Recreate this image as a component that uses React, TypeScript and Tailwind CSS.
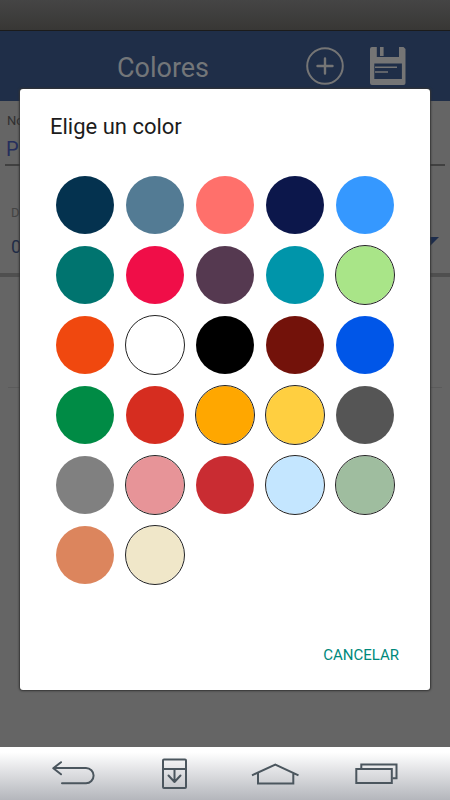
import React, { useState } from 'react';
import clsx from 'clsx';

type Swatch = { name: string; fill: string; outlined?: boolean };

const SWATCHES: Swatch[] = [
  { name: 'Azul petróleo', fill: 'bg-[#04324f]' },
  { name: 'Azul acero', fill: 'bg-[#537b94]' },
  { name: 'Coral', fill: 'bg-[#ff706b]' },
  { name: 'Azul noche', fill: 'bg-[#0c174b]' },
  { name: 'Celeste', fill: 'bg-[#3598ff]' },
  { name: 'Verde azulado', fill: 'bg-[#00746f]' },
  { name: 'Carmesí', fill: 'bg-[#f00e48]' },
  { name: 'Ciruela', fill: 'bg-[#553950]' },
  { name: 'Turquesa', fill: 'bg-[#0095aa]' },
  { name: 'Verde claro', fill: 'bg-[#a9e588]', outlined: true },
  { name: 'Naranja rojizo', fill: 'bg-[#f0480f]' },
  { name: 'Blanco', fill: 'bg-white', outlined: true },
  { name: 'Negro', fill: 'bg-black' },
  { name: 'Granate', fill: 'bg-[#73120a]' },
  { name: 'Azul', fill: 'bg-[#0056e8]' },
  { name: 'Verde', fill: 'bg-[#008b45]' },
  { name: 'Rojo', fill: 'bg-[#d62d20]' },
  { name: 'Naranja', fill: 'bg-[#ffa700]', outlined: true },
  { name: 'Amarillo', fill: 'bg-[#ffcf40]', outlined: true },
  { name: 'Gris oscuro', fill: 'bg-[#555555]' },
  { name: 'Gris', fill: 'bg-[#808080]' },
  { name: 'Rosa', fill: 'bg-[#e79498]', outlined: true },
  { name: 'Rojo cereza', fill: 'bg-[#c92c32]' },
  { name: 'Azul claro', fill: 'bg-[#c4e6ff]', outlined: true },
  { name: 'Verde salvia', fill: 'bg-[#9fbd9f]', outlined: true },
  { name: 'Terracota', fill: 'bg-[#dc855d]' },
  { name: 'Crema', fill: 'bg-[#f0e7c9]', outlined: true },
];

const AddIcon = () => (
  <svg width="38" height="38" viewBox="0 0 38 38" fill="none" stroke="currentColor" strokeWidth="2" strokeLinecap="round">
    <circle cx="19" cy="19" r="17.8" />
    <path d="M19 11.5v15M11.5 19h15" strokeWidth="2.4" />
  </svg>
);

const SaveIcon = () => (
  <svg width="36" height="38" viewBox="0 0 36 38" fill="currentColor">
    <path
      fillRule="evenodd"
      d="M2 0h4.8v10H29V0h4.5L35.500 2v34a2 2 0 0 1-2 2H2a2 2 0 0 1-2-2V2a2 2 0 0 1 2-2ZM4.300 16.500v15.500h27.600V16.500Z"
    />
    <path d="M10 0h3.600v9H10zM5 19.500h22v1.600H5zM5 24.200h13v1.600H5z" />
  </svg>
);

const BackIcon = () => (
  <svg width="44" height="26" viewBox="0 0 44 26" fill="none" stroke="currentColor" strokeWidth="2" strokeLinecap="round" strokeLinejoin="round">
    <path d="M9 1.200 1.300 7.300l7.700 6M1.800 7H34a7.600 7.600 0 0 1 0 15.200H10" />
  </svg>
);

const DownloadIcon = () => (
  <svg width="26" height="32" viewBox="0 0 26 32" fill="none" stroke="currentColor" strokeWidth="2" strokeLinecap="round" strokeLinejoin="round">
    <rect x="1" y="1.500" width="23" height="28.500" rx="1" />
    <path d="M1 11h23M12.500 11.500V24M6.500 17.500l6 6.500 6-6.500" />
  </svg>
);

const HomeIcon = () => (
  <svg width="48" height="24" viewBox="0 0 48 24" fill="none" stroke="currentColor" strokeWidth="2">
    <path d="M1 13.300 24.300 2.500l23.200 10.800M7 10.500v11h35.300v-11" />
  </svg>
);

const RecentIcon = () => (
  <svg width="44" height="24" viewBox="0 0 44 24" fill="none" stroke="currentColor" strokeWidth="2">
    <rect x="2.300" y="7" width="35.500" height="14" />
    <path d="M7.300 6.500v-4h35.200v13.800H38.500" />
  </svg>
);

const NavButton: React.FC<{ label: string; children: React.ReactNode }> = ({ label, children }) => (
  <button type="button" aria-label={label} className="flex flex-1 items-center justify-center">
    {children}
  </button>
);

const ColorForm = () => (
  <form className="flex-1 bg-[#656565]">
    <div className="px-[5px] pt-3">
      <label htmlFor="name" className="block px-0.5 text-[13px] leading-4 text-[#303030]">
        Nombre
      </label>
      <input
        id="name"
        defaultValue="P"
        className="block h-[37px] w-full border-b-2 border-[#404040] bg-transparent px-px pt-1 text-xl text-[#262e5c] outline-none"
      />
    </div>

    <div className="border-b-4 border-[#4f4f4f] px-[11px] pb-3 pt-[39px]">
      <label htmlFor="amount" className="block text-[13px] leading-4 text-[#444444]">
        De
      </label>
      <div className="relative mt-3">
        <select id="amount" className="block h-7 w-full appearance-none bg-transparent text-lg text-[#1f2c47] outline-none">
          <option>0</option>
        </select>
        <svg width="24" height="12" viewBox="0 0 24 12" className="pointer-events-none absolute right-0 top-1 fill-[#1d2d4d]">
          <path d="M0 0h24L12 12Z" />
        </svg>
      </div>
    </div>

    <hr className="mx-2 mt-[110px] border-[#5b5b5b]" />
  </form>
);

const ColorDialog: React.FC<{ onCancel: () => void }> = ({ onCancel }) => {
  const [selected, setSelected] = useState<string | null>(null);

  return (
    <div className="absolute inset-0 flex items-center justify-center px-5 pt-px">
      <div
        role="dialog"
        aria-labelledby="dialog-title"
        className="flex w-full max-w-lg flex-col rounded-[3px] bg-white pb-[17px] shadow-[0_0_2px_1px_#333333]"
      >
        <h2 id="dialog-title" className="px-[30px] pt-6 text-[22px] leading-7 text-[#1c1c1c]">
          Elige un color
        </h2>

        <div className="mt-[34px] grid grid-cols-5 justify-items-center gap-y-2.5 px-[30px]">
          {SWATCHES.map((s) => (
            <button
              key={s.name}
              type="button"
              aria-label={s.name}
              aria-pressed={selected === s.name}
              onClick={() => setSelected(s.name)}
              className={clsx(
                'size-[60px] rounded-full border bg-clip-padding',
                s.fill,
                s.outlined ? 'border-[#222222]' : 'border-transparent'
              )}
            />
          ))}
        </div>

        <button type="button" onClick={onCancel} className="mr-[31px] mt-[52px] h-9 self-end text-[15px] text-[#00897b]">
          CANCELAR
        </button>
      </div>
    </div>
  );
};

const App: React.FC = () => {
  const [isOpen, setIsOpen] = useState(true);

  return (
    <div className="flex min-h-screen flex-col bg-[#656565] font-[Roboto,sans-serif]">
      {/* Status bar */}
      <div className="h-[31px] border-b border-[#1b1b1b] bg-linear-to-b from-[#454545] to-[#383735]" />

      <main className="relative flex flex-1 flex-col">
        <header className="flex h-[70px] items-center bg-[#1f2e48] pl-5 pr-11 text-[#737679]">
          <h1 className="flex-1 pt-1 text-center text-[27px] leading-9">Colores</h1>
          <div className="flex items-center gap-[26px] text-[#757575]">
            <button type="button" aria-label="Añadir" onClick={() => setIsOpen(true)}>
              <AddIcon />
            </button>
            <button type="button" aria-label="Guardar">
              <SaveIcon />
            </button>
          </div>
        </header>

        <ColorForm />

        {isOpen && <ColorDialog onCancel={() => setIsOpen(false)} />}
      </main>

      {/* Navigation keys */}
      <nav className="flex h-[53px] bg-linear-to-b from-white from-10% to-[#b4b6bc] px-6 text-[#4b565e]">
        <NavButton label="Atrás"><BackIcon /></NavButton>
        <NavButton label="Notificaciones"><DownloadIcon /></NavButton>
        <NavButton label="Inicio"><HomeIcon /></NavButton>
        <NavButton label="Recientes"><RecentIcon /></NavButton>
      </nav>
    </div>
  );
};

export default App;
